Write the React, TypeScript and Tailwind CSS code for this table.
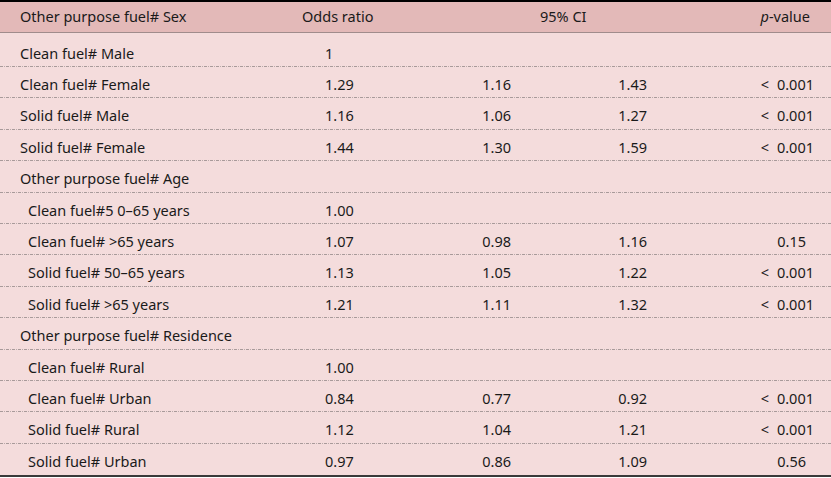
import React from "react";

type Row = {
  label: string;
  indent?: boolean;
  or?: string;
  lo?: string;
  hi?: string;
  p?: string;
  first?: boolean;
  last?: boolean;
};

const rows: Row[] = [
  { label: "Clean fuel# Male", or: "1", first: true },
  { label: "Clean fuel# Female", or: "1.29", lo: "1.16", hi: "1.43", p: "< 0.001" },
  { label: "Solid fuel# Male", or: "1.16", lo: "1.06", hi: "1.27", p: "< 0.001" },
  { label: "Solid fuel# Female", or: "1.44", lo: "1.30", hi: "1.59", p: "< 0.001" },
  { label: "Other purpose fuel# Age" },
  { label: "Clean fuel#5 0–65 years", indent: true, or: "1.00" },
  { label: "Clean fuel# >65 years", indent: true, or: "1.07", lo: "0.98", hi: "1.16", p: "0.15" },
  { label: "Solid fuel# 50–65 years", indent: true, or: "1.13", lo: "1.05", hi: "1.22", p: "< 0.001" },
  { label: "Solid fuel# >65 years", indent: true, or: "1.21", lo: "1.11", hi: "1.32", p: "< 0.001" },
  { label: "Other purpose fuel# Residence" },
  { label: "Clean fuel# Rural", indent: true, or: "1.00" },
  { label: "Clean fuel# Urban", indent: true, or: "0.84", lo: "0.77", hi: "0.92", p: "< 0.001" },
  { label: "Solid fuel# Rural", indent: true, or: "1.12", lo: "1.04", hi: "1.21", p: "< 0.001" },
  { label: "Solid fuel# Urban", indent: true, or: "0.97", lo: "0.86", hi: "1.09", p: "0.56", last: true },
];

function PVal({ p }: { p?: string }) {
  if (!p) return null;
  if (p.startsWith("<")) {
    return (
      <span>
        <span className="mr-[8px]">&lt;</span>0.001
      </span>
    );
  }
  return <span className="mr-[8px]">{p}</span>;
}

function Dash() {
  return (
    <div className="h-px w-full bg-[repeating-linear-gradient(90deg,#a89a9a_0px,#a89a9a_3px,transparent_3px,transparent_4px,#b8aaaa_4px,#b8aaaa_5px,transparent_5px,transparent_6px)]" />
  );
}

export default function App() {
  return (
    <div
      className="w-[831px] bg-white text-[14.5px] text-[#1a1a1a]"
      style={{ fontFamily: '"Noto Sans", "Open Sans", sans-serif' }}
    >
      <div className="border-t-2 border-black">
        <div className="flex h-[31px] border-b border-[#a08c8c] bg-[#e3b9b8] pt-[5px] leading-[19px]">
          <div className="w-[300px] pl-[20px]">Other purpose fuel# Sex</div>
          <div className="w-[240px] pl-[2px]">Odds ratio</div>
          <div className="w-[100px]">95% CI</div>
          <div className="flex-1 pr-[21px] text-right">
            <span className="italic">p</span>-value
          </div>
        </div>
        <div className="bg-[#f4dcdc]">
          {rows.map((r, i) => (
            <div
              key={i}
              className={
                "flex flex-col " +
                (r.first ? "h-[34px]" : r.last ? "h-[33px] border-b-2 border-[#3a3a3a]" : "h-[31.4px]")
              }
            >
              <div
                className={
                  "flex flex-1 leading-[19px] " + (r.first ? "pt-[11px]" : "pt-[8px]")
                }
              >
                <div className={"w-[300px] " + (r.indent ? "pl-[28px]" : "pl-[20px]")}>{r.label}</div>
                <div className="w-[160px] pl-[25px]">{r.or}</div>
                <div className="w-[51px] text-right">{r.lo}</div>
                <div className="w-[136px] text-right">{r.hi}</div>
                <div className="flex-1 pr-[17px] text-right">
                  <PVal p={r.p} />
                </div>
              </div>
              {!r.last && <Dash />}
            </div>
          ))}
        </div>
      </div>
    </div>
  );
}
